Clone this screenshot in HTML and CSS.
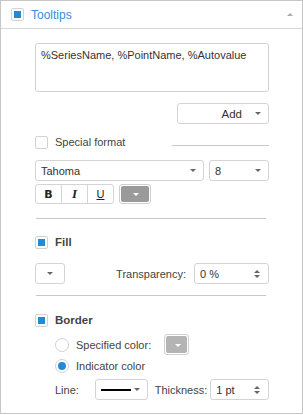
FILE: index.html
```html
<!DOCTYPE html>
<html>
<head>
<meta charset="utf-8">
<link rel="stylesheet" href="styles.css">
</head>
<body>
<div class="panel">
  <div class="header">
    <span class="check checked"></span>
    <span class="title">Tooltips</span>
    <span class="collapse"></span>
  </div>
  <div class="content">
    <div class="textarea">%SeriesName, %PointName, %Autovalue</div>

    <div class="row right add-row">
      <div class="select add"><span class="val">Add</span><span class="arrow"></span></div>
    </div>

    <div class="row special">
      <span class="check"></span>
      <span class="label">Special format</span>
      <span class="fillline"></span>
    </div>

    <div class="row fonts">
      <div class="select font"><span class="val">Tahoma</span><span class="arrow"></span></div>
      <div class="select size"><span class="val">8</span><span class="arrow"></span></div>
    </div>

    <div class="row styles">
      <div class="btngroup">
        <span class="sbtn b">B</span><span class="sbtn i">I</span><span class="sbtn u">U</span>
      </div>
      <div class="colorbtn"><span class="warrow"></span></div>
    </div>

    <div class="sep sep1"></div>

    <div class="row section fill-head">
      <span class="check checked"></span>
      <span class="label bold">Fill</span>
    </div>

    <div class="row fill-row">
      <div class="select small"><span class="arrow"></span></div>
      <span class="label trans">Transparency:</span>
      <div class="spin trans-spin"><span class="val">0 %</span><span class="spinarrows"><i class="up"></i><i class="down"></i></span></div>
    </div>

    <div class="sep sep2"></div>

    <div class="row section border-head">
      <span class="check checked"></span>
      <span class="label bold">Border</span>
    </div>

    <div class="row radio-row spec">
      <span class="radio"></span>
      <span class="label">Specified color:</span>
      <div class="colorbtn light"><span class="warrow"></span></div>
    </div>

    <div class="row radio-row ind">
      <span class="radio on"></span>
      <span class="label">Indicator color</span>
    </div>

    <div class="row line-row">
      <span class="label line-lbl">Line:</span>
      <div class="select linesel"><span class="stroke"></span><span class="arrow"></span></div>
      <span class="label thick-lbl">Thickness:</span>
      <div class="spin thick-spin"><span class="val">1 pt</span><span class="spinarrows"><i class="up"></i><i class="down"></i></span></div>
    </div>
  </div>
</div>
</body>
</html>
```

FILE: styles.css
```css
* { box-sizing: border-box; }
html, body { margin: 0; padding: 0; background: #fff; }
body {
  font-family: "Liberation Sans", Arial, sans-serif;
  font-size: 11px;
  color: #444;
}
.panel {
  width: 303px;
  height: 414px;
  border: 1px solid #c6c6c6;
}
.header {
  height: 28px;
  border-bottom: 1px solid #d6d6d6;
  display: flex;
  align-items: center;
  padding-left: 10px;
}
.title {
  color: #3a8dd6;
  font-size: 12px;
  margin-left: 7px;
}
.collapse {
  margin-left: auto;
  margin-right: 9px;
  width: 0; height: 0;
  border-left: 3px solid transparent;
  border-right: 3px solid transparent;
  border-bottom: 3px solid #aaa;
}
.check {
  width: 13px; height: 13px;
  border: 1px solid #d2d2d2;
  border-radius: 2px;
  background: #fff;
  flex: none;
  display: flex;
  align-items: center;
  justify-content: center;
}
.check.checked::after {
  content: "";
  width: 7px; height: 7px;
  background: #248bd3;
}
.content {
  padding: 14px 33px 0 34px;
  display: flex;
  flex-direction: column;
}
.textarea {
  height: 49px;
  border: 1px solid #d2d2d2;
  border-radius: 3px;
  padding: 4px 5px;
  font-size: 11px;
  line-height: 14px;
  color: #333;
}
.row { display: flex; align-items: center; }
.right { justify-content: flex-end; }
.select {
  height: 21px;
  border: 1px solid #d4d4d4;
  border-radius: 3px;
  display: flex;
  align-items: center;
  padding: 0 7px 0 5px;
  font-size: 11px;
  color: #333;
}
.arrow {
  width: 0; height: 0;
  border-left: 3px solid transparent;
  border-right: 3px solid transparent;
  border-top: 3px solid #666;
  margin-left: auto;
}
.add-row { margin-top: 11px; }
.add { width: 92px; }
.add .val { margin-left: auto; margin-right: 13px; font-size: 11.5px; }
.add .arrow { margin-left: 0; }
.special { margin-top: 11px; height: 14px; }
.label { margin-left: 7px; white-space: nowrap; font-size: 11px; }
.fillline {
  width: 97px;
  height: 1px;
  background: #c8c8c8;
  margin-left: auto;
  margin-top: 6px;
}
.fonts { margin-top: 11px; gap: 5px; }
.font { width: 169px; }
.size { width: 60px; }
.styles { margin-top: 3px; }
.btngroup {
  display: flex;
  border: 1px solid #d4d4d4;
  border-radius: 3px;
  height: 20px;
}
.sbtn {
  width: 26px;
  display: flex;
  align-items: center;
  justify-content: center;
  color: #222;
  font-size: 12px;
  border-left: 1px solid #d4d4d4;
}
.sbtn:first-child { border-left: none; width: 25px; }
.sbtn.b { font-weight: bold; font-family: "DejaVu Sans", sans-serif; font-size: 11px; }
.sbtn.i { font-style: italic; font-family: "Liberation Serif", serif; font-weight: bold; font-size: 13px; }
.sbtn.u { text-decoration: underline; font-size: 11px; }
.colorbtn {
  width: 32px; height: 20px;
  margin-left: 5px;
  border: 1px solid #d0d0d0;
  border-radius: 3px;
  padding: 1px;
  display: flex;
}
.colorbtn .warrow {
  flex: 1;
  background: #9a9a9a;
  border-radius: 2px;
  position: relative;
}
.warrow::after {
  content: "";
  position: absolute;
  left: 50%; top: 50%;
  margin-left: -2px; margin-top: -1px;
  border-left: 3px solid transparent;
  border-right: 3px solid transparent;
  border-top: 3px solid #fff;
}
.colorbtn.light { width: 25px; height: 21px; margin-left: 13px; }
.colorbtn.light .warrow { background: #b4b4b4; }
.sep {
  height: 1px;
  background: #c8c8c8;
  width: 230px;
  margin-left: 1px;
}
.sep1 { margin-top: 14px; }
.fill-head { margin-top: 16px; height: 14px; }
.bold { font-weight: bold; font-size: 11.5px; }
.fill-row { margin-top: 14px; }
.small { width: 30px; padding: 0; justify-content: center; }
.small .arrow { margin-left: 0; }
.trans { margin-left: auto; margin-right: 8px; }
.spin {
  height: 21px;
  border: 1px solid #d4d4d4;
  border-radius: 3px;
  display: flex;
  align-items: center;
  padding: 0 8px 0 5px;
  font-size: 11px;
  color: #333;
}
.trans-spin { width: 75px; }
.spinarrows {
  margin-left: auto;
  display: flex;
  flex-direction: column;
  gap: 2px;
}
.spinarrows i { display: block; width: 0; height: 0; border-left: 3px solid transparent; border-right: 3px solid transparent; }
.spinarrows .up { border-bottom: 3px solid #666; }
.spinarrows .down { border-top: 3px solid #666; }
.sep2 { margin-top: 11px; }
.border-head { margin-top: 17px; height: 14px; }
.radio-row { margin-left: 20px; }
.spec { margin-top: 7px; }
.ind { margin-top: 4px; }
.radio {
  width: 14px; height: 14px;
  border: 1px solid #d2d2d2;
  border-radius: 50%;
  display: flex;
  align-items: center;
  justify-content: center;
  flex: none;
}
.radio.on::after {
  content: "";
  width: 8px; height: 8px;
  border-radius: 50%;
  background: #248bd3;
}
.line-row { margin-top: 6px; }
.line-lbl { margin-left: 20px; width: 41px; }
.linesel { width: 54px; padding: 0 7px 0 5px; }
.stroke { width: 30px; height: 2px; background: #000; }
.thick-lbl { margin-left: 7px; }
.thick-spin { width: 60px; margin-left: 3px; }
```
